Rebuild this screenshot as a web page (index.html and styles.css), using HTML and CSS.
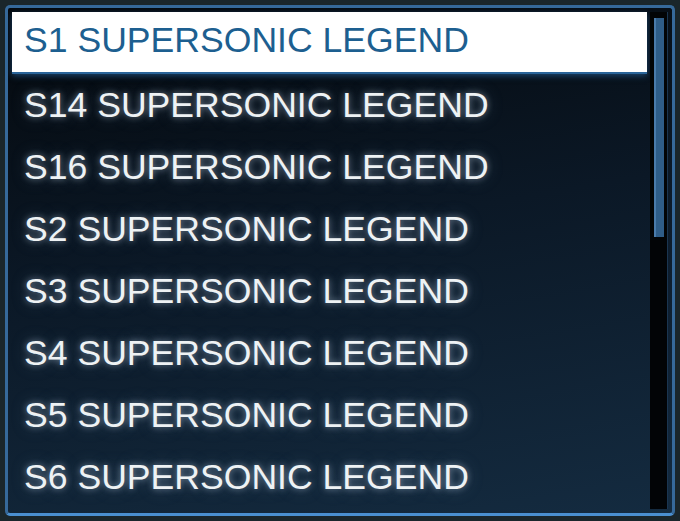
FILE: index.html
```html
<!DOCTYPE html>
<html>
<head>
<meta charset="utf-8">
<link rel="stylesheet" href="styles.css">
</head>
<body>
<div class="panel">
  <ul class="list">
    <li class="row selected">S1 SUPERSONIC LEGEND</li>
    <li class="row">S14 SUPERSONIC LEGEND</li>
    <li class="row">S16 SUPERSONIC LEGEND</li>
    <li class="row">S2 SUPERSONIC LEGEND</li>
    <li class="row">S3 SUPERSONIC LEGEND</li>
    <li class="row">S4 SUPERSONIC LEGEND</li>
    <li class="row">S5 SUPERSONIC LEGEND</li>
    <li class="row">S6 SUPERSONIC LEGEND</li>
  </ul>
  <div class="track"><div class="thumb"></div></div>
</div>
</body>
</html>
```
FILE: styles.css
```css
html, body {
  margin: 0;
  padding: 0;
}
body {
  width: 680px;
  height: 521px;
  background: #1a262b;
  overflow: hidden;
  font-family: "Liberation Sans", Arial, sans-serif;
}
.panel {
  box-sizing: border-box;
  margin: 5px;
  width: 670px;
  height: 511px;
  border: 3px solid #36699a;
  border-bottom-color: #4a8fd0;
  border-radius: 5px;
  padding: 4px 4px 4px 4px;
  display: flex;
  gap: 3px;
  background: linear-gradient(170deg, #04080c 0%, #0b1826 45%, #142b40 100%);
}
.list {
  list-style: none;
  margin: 0;
  padding: 0;
  flex: 1;
  display: flex;
  flex-direction: column;
}
.row {
  height: 62px;
  line-height: 62px;
  padding-left: 12px;
  font-size: 35.6px;
  color: #eef2f4;
  white-space: nowrap;
  text-shadow: 0 0 6px rgba(190, 210, 230, 0.55), 0 0 16px rgba(120, 150, 180, 0.4);
}
.row.selected {
  box-sizing: border-box;
  height: 62px;
  line-height: 57px;
  background: #ffffff;
  color: #1d5f90;
  text-shadow: none;
  border-bottom: 2px solid #2a6499;
  box-shadow: 0 2px 6px rgba(40, 100, 160, 0.6);
}
.track {
  width: 18px;
  background: #020406;
  padding: 6px 3px 0 4px;
  box-sizing: border-box;
  border-right: 1px solid #1a3550;
}
.thumb {
  height: 219px;
  background: #2f5d88;
  border-left: 2px solid #4a7bab;
  box-sizing: border-box;
}
```
